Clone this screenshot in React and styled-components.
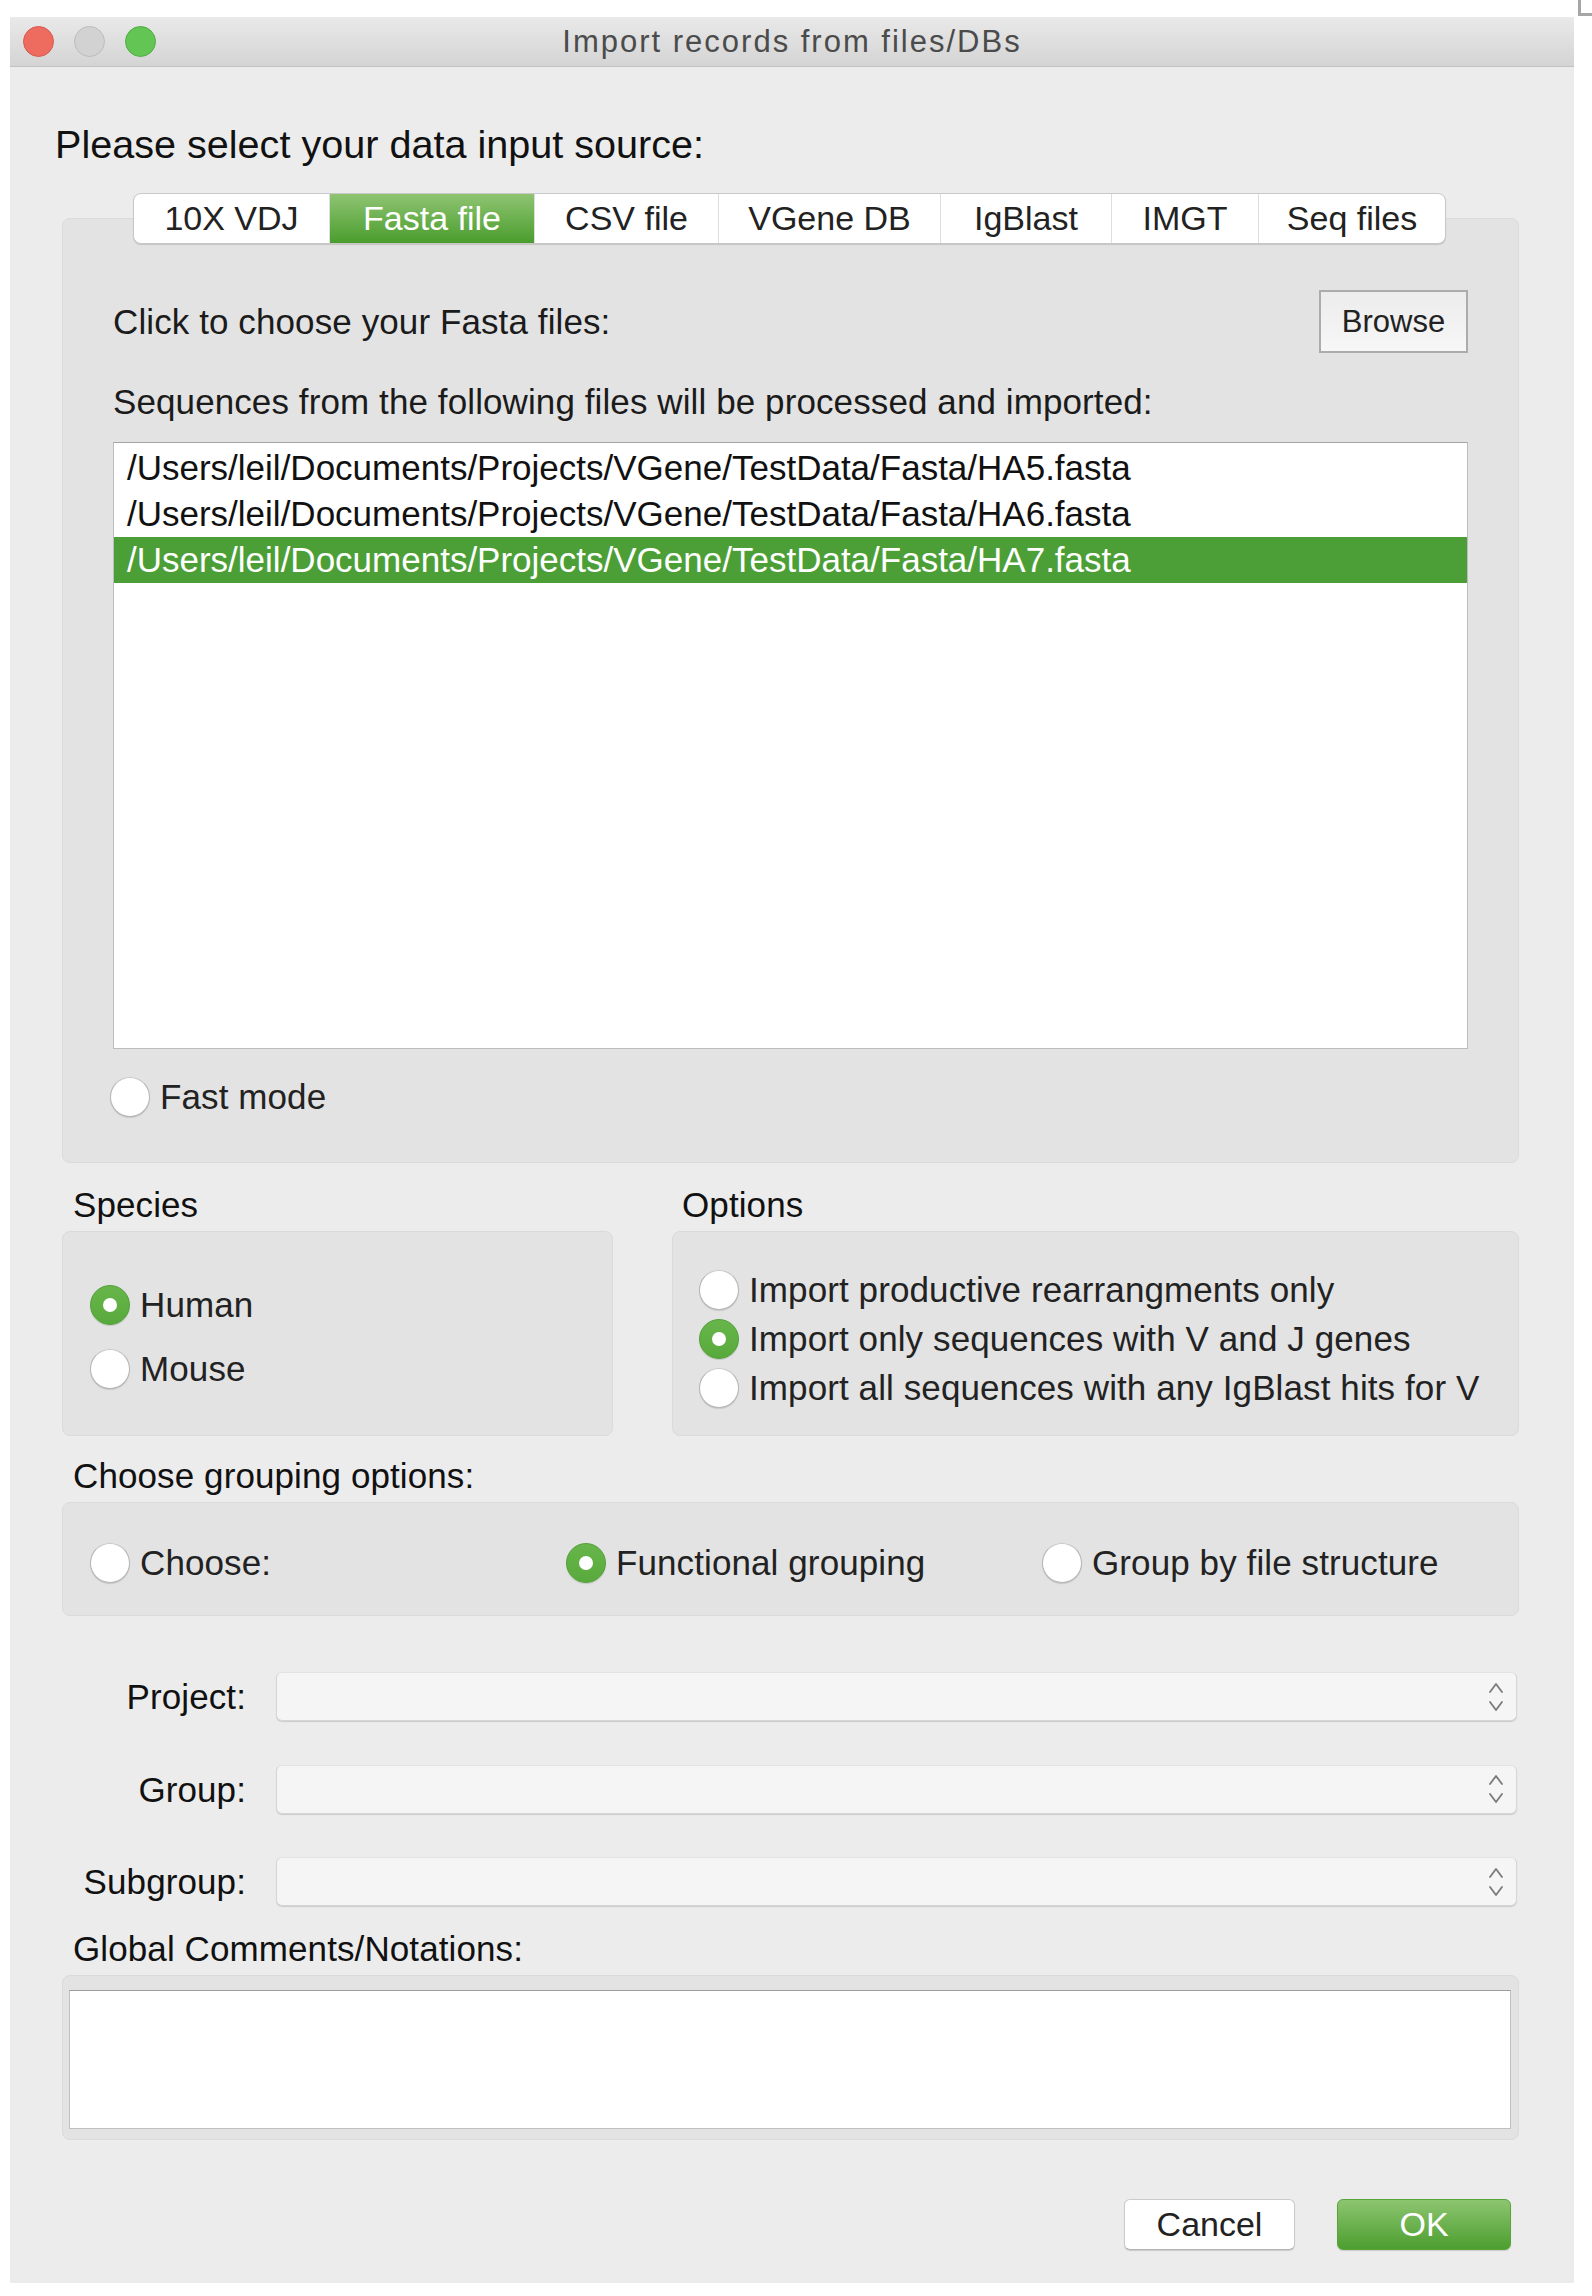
import React from 'react';
import styled, { createGlobalStyle, css } from 'styled-components';

const GlobalStyle = createGlobalStyle`
  html, body {
    margin: 0;
    padding: 0;
    background: #ffffff;
  }
  body {
    font-family: 'Liberation Sans', Arial, sans-serif;
    color: #1d1d1d;
  }
`;

const BODY_SIZE = '35px';

const Page = styled.div`
  position: relative;
  width: 1592px;
  height: 2296px;
  padding: 17px 0 0 10px;
  box-sizing: border-box;
`;

const CornerMark = styled.div`
  position: absolute;
  top: 0;
  left: 1578px;
  width: 11px;
  height: 13px;
  border-left: 3px solid #a6a6a6;
  border-bottom: 3px solid #a6a6a6;
`;

const Window = styled.div`
  width: 1564px;
  height: 2266px;
  background: #ececec;
  display: flex;
  flex-direction: column;
`;

const TitleBar = styled.div`
  height: 49px;
  border-bottom: 1px solid #c2c2c2;
  background: linear-gradient(#e9e9e9, #d4d4d4);
  display: grid;
  grid-template-columns: 1fr auto 1fr;
  align-items: center;
`;

const Lights = styled.div`
  display: flex;
  gap: 20px;
  padding-left: 13px;
`;

const Light = styled.span`
  width: 31px;
  height: 31px;
  border-radius: 50%;
  box-sizing: border-box;
  background: ${({ $color }) => $color.fill};
  border: 1px solid ${({ $color }) => $color.edge};
`;

const Title = styled.div`
  font-size: 31px;
  letter-spacing: 2px;
  color: #4b4b4b;
`;

const Content = styled.div`
  display: flex;
  flex-direction: column;
  padding: 0 55px 33px 52px;
`;

const Heading = styled.div`
  margin: 54px 0 0 -7px;
  font-size: 39.6px;
  line-height: 46px;
  color: #111111;
`;

const TabBar = styled.div`
  position: relative;
  z-index: 1;
  align-self: flex-start;
  display: flex;
  margin: 26px 0 0 71px;
  height: 51px;
  box-sizing: border-box;
  border: 1px solid #c8c8c8;
  border-radius: 8px;
  background: #ffffff;
  overflow: hidden;
  box-shadow: 0 1px 1px rgba(0, 0, 0, 0.14);
`;

const Tab = styled.div`
  width: ${({ $w }) => $w}px;
  display: flex;
  align-items: center;
  justify-content: center;
  font-size: 34px;
  color: #222222;
  & + & {
    border-left: 1px solid #dedede;
  }
  ${({ $active }) =>
    $active &&
    css`
      background: linear-gradient(#8fc472, #4a9d2d);
      color: #ffffff;
    `}
`;

const Pane = styled.div`
  margin-top: -26px;
  height: 945px;
  box-sizing: border-box;
  background: #e3e3e3;
  border: 1px solid #dadada;
  border-radius: 8px;
  padding: 71px 50px 0 50px;
  display: flex;
  flex-direction: column;
`;

const FileChooser = styled.div`
  display: flex;
  align-items: center;
  justify-content: space-between;
  height: 63px;
`;

const Label = styled.div`
  font-size: ${BODY_SIZE};
  letter-spacing: 0.1px;
  line-height: 40px;
  color: #1b1b1b;
  margin-top: ${({ $mt }) => $mt || 0}px;
`;

const BrowseButton = styled.div`
  width: 149px;
  height: 63px;
  box-sizing: border-box;
  border: 2px solid #acacac;
  background: linear-gradient(#ececec, #f7f7f7);
  display: flex;
  align-items: center;
  justify-content: center;
  font-size: 31px;
  color: #222222;
`;

const FileList = styled.div`
  margin-top: 20px;
  height: 607px;
  box-sizing: border-box;
  background: #ffffff;
  border: 1px solid #bcbcbc;
  border-top-color: #a4a4a4;
  padding-top: 2px;
`;

const FileItem = styled.div`
  height: 46px;
  line-height: 46px;
  padding-left: 13px;
  font-size: ${BODY_SIZE};
  color: ${({ $selected }) => ($selected ? '#ffffff' : '#111111')};
  background: ${({ $selected }) => ($selected ? '#4c9f36' : 'transparent')};
  white-space: nowrap;
`;

const RadioOption = styled.div`
  display: flex;
  align-items: center;
  gap: 10px;
  height: 40px;
  font-size: ${BODY_SIZE};
  letter-spacing: 0.1px;
  color: #222222;
  white-space: nowrap;
`;

const RadioCircle = styled.span`
  position: relative;
  flex: none;
  width: 40px;
  height: 40px;
  border-radius: 50%;
  box-sizing: border-box;
  background: #ffffff;
  border: 1px solid #b6b6b6;
  border-top-color: #c8c8c8;
  box-shadow: 0 1px 1px rgba(0, 0, 0, 0.12);
  ${({ $checked }) =>
    $checked &&
    css`
      background: linear-gradient(#68b64b, #58a93b);
      border-color: #53a03a;
      &::after {
        content: '';
        position: absolute;
        left: 12px;
        top: 12px;
        width: 14px;
        height: 14px;
        border-radius: 50%;
        background: #ffffff;
      }
    `}
`;

const Radio = ({ label, checked }) => (
  <RadioOption>
    <RadioCircle $checked={checked} />
    {label}
  </RadioOption>
);

const FastModeRow = styled.div`
  margin: 28px 0 0 -3px;
`;

const SplitRow = styled.div`
  display: flex;
  gap: 59px;
  margin-top: 22px;
`;

const Column = styled.div`
  display: flex;
  flex-direction: column;
  width: ${({ $w }) => ($w ? `${$w}px` : 'auto')};
  flex: ${({ $w }) => ($w ? 'none' : 1)};
`;

const SectionLabel = styled.div`
  font-size: ${BODY_SIZE};
  letter-spacing: 0.1px;
  line-height: 40px;
  color: #111111;
  margin: ${({ $mt }) => $mt || 0}px 0 6px ${({ $ml }) => $ml ?? 11}px;
`;

const GroupBox = styled.div`
  height: ${({ $h }) => $h}px;
  box-sizing: border-box;
  background: #e3e3e3;
  border: 1px solid #dadada;
  border-radius: 8px;
  padding: ${({ $pt }) => $pt}px 0 0 ${({ $pl }) => $pl}px;
  display: flex;
  flex-direction: column;
  gap: ${({ $gap }) => $gap || 0}px;
`;

const GroupingGrid = styled.div`
  display: grid;
  grid-template-columns: repeat(3, 476px);
`;

const FormGrid = styled.div`
  display: grid;
  grid-template-columns: 184px 1fr;
  column-gap: 30px;
  row-gap: 43.5px;
  margin: 56px 2px 0 0;
`;

const FormLabel = styled.div`
  text-align: right;
  font-size: ${BODY_SIZE};
  letter-spacing: 0.1px;
  line-height: 49px;
  color: #111111;
`;

const Combo = styled.div`
  height: 49px;
  box-sizing: border-box;
  background: #f5f5f5;
  border: 1px solid #d6d6d6;
  border-top-color: #e2e2e2;
  border-radius: 6px;
  box-shadow: 0 1px 1px rgba(0, 0, 0, 0.14);
  display: flex;
  align-items: center;
  justify-content: flex-end;
  padding-right: 11px;
`;

const Stepper = () => (
  <svg width="18" height="36" viewBox="0 0 18 36" fill="none">
    <path d="M3 13 L9 5 L15 13" stroke="#7a7a7a" strokeWidth="1.8" strokeLinecap="round" strokeLinejoin="round" />
    <path d="M3 23 L9 31 L15 23" stroke="#7a7a7a" strokeWidth="1.8" strokeLinecap="round" strokeLinejoin="round" />
  </svg>
);

const CommentsFrame = styled.div`
  height: 165px;
  box-sizing: border-box;
  background: #e3e3e3;
  border: 1px solid #dadada;
  border-radius: 8px;
  padding: 14px 7px 10px 6px;
  display: flex;
`;

const TextBox = styled.div`
  flex: 1;
  background: #ffffff;
  border: 1px solid #c0c0c0;
  border-top-color: #9c9c9c;
`;

const ButtonRow = styled.div`
  display: flex;
  justify-content: flex-end;
  gap: 42px;
  margin: 59px 8px 0 0;
`;

const DialogButton = styled.div`
  width: ${({ $w }) => $w}px;
  height: 51px;
  box-sizing: border-box;
  border-radius: 6px;
  display: flex;
  align-items: center;
  justify-content: center;
  font-size: 34px;
  background: #ffffff;
  color: #222222;
  border: 1px solid #cbcbcb;
  border-bottom-color: #b3b3b3;
  box-shadow: 0 1px 1px rgba(0, 0, 0, 0.14);
  ${({ $primary }) =>
    $primary &&
    css`
      background: linear-gradient(#8dc570, #4c9e2f);
      border-color: #58a53b;
      color: #ffffff;
    `}
`;

const lights = [
  { fill: '#ed6b5f', edge: '#d9594e' },
  { fill: '#d2d2d2', edge: '#bcbcbc' },
  { fill: '#62c554', edge: '#53ac45' },
];

const tabs = [
  { name: '10X VDJ', w: 195 },
  { name: 'Fasta file', w: 204, active: true },
  { name: 'CSV file', w: 183 },
  { name: 'VGene DB', w: 221 },
  { name: 'IgBlast', w: 170 },
  { name: 'IMGT', w: 146 },
  { name: 'Seq files', w: 186 },
];

const files = ['HA5', 'HA6', 'HA7'].map(
  (f) => `/Users/leil/Documents/Projects/VGene/TestData/Fasta/${f}.fasta`
);

const importOptions = [
  { label: 'Import productive rearrangments only', checked: false },
  { label: 'Import only sequences with V and J genes', checked: true },
  { label: 'Import all sequences with any IgBlast hits for V', checked: false },
];

const grouping = [
  { label: 'Choose:', checked: false },
  { label: 'Functional grouping', checked: true },
  { label: 'Group by file structure', checked: false },
];

const App = () => {
  return (
    <Page>
      <GlobalStyle />
      <CornerMark />
      <Window>
        <TitleBar>
          <Lights>
            {lights.map((c, i) => (
              <Light key={i} $color={c} />
            ))}
          </Lights>
          <Title>Import records from files/DBs</Title>
          <div />
        </TitleBar>
        <Content>
          <Heading>Please select your data input source:</Heading>
          <TabBar>
            {tabs.map((t) => (
              <Tab key={t.name} $w={t.w} $active={t.active}>
                {t.name}
              </Tab>
            ))}
          </TabBar>
          <Pane>
            <FileChooser>
              <Label>Click to choose your Fasta files:</Label>
              <BrowseButton>Browse</BrowseButton>
            </FileChooser>
            <Label $mt={29}>
              Sequences from the following files will be processed and imported:
            </Label>
            <FileList>
              {files.map((f, i) => (
                <FileItem key={f} $selected={i === files.length - 1}>
                  {f}
                </FileItem>
              ))}
            </FileList>
            <FastModeRow>
              <Radio label="Fast mode" />
            </FastModeRow>
          </Pane>

          <SplitRow>
            <Column $w={551}>
              <SectionLabel>Species</SectionLabel>
              <GroupBox $h={205} $pt={53} $pl={27} $gap={24}>
                <Radio label="Human" checked />
                <Radio label="Mouse" />
              </GroupBox>
            </Column>
            <Column>
              <SectionLabel $ml={10}>Options</SectionLabel>
              <GroupBox $h={205} $pt={38} $pl={26} $gap={9}>
                {importOptions.map((o) => (
                  <Radio key={o.label} label={o.label} checked={o.checked} />
                ))}
              </GroupBox>
            </Column>
          </SplitRow>

          <SectionLabel $mt={20}>Choose grouping options:</SectionLabel>
          <GroupBox $h={114} $pt={40} $pl={27}>
            <GroupingGrid>
              {grouping.map((g) => (
                <Radio key={g.label} label={g.label} checked={g.checked} />
              ))}
            </GroupingGrid>
          </GroupBox>

          <FormGrid>
            {['Project:', 'Group:', 'Subgroup:'].map((l) => (
              <React.Fragment key={l}>
                <FormLabel>{l}</FormLabel>
                <Combo>
                  <Stepper />
                </Combo>
              </React.Fragment>
            ))}
          </FormGrid>

          <SectionLabel $mt={23}>Global Comments/Notations:</SectionLabel>
          <CommentsFrame>
            <TextBox />
          </CommentsFrame>

          <ButtonRow>
            <DialogButton $w={171}>Cancel</DialogButton>
            <DialogButton $w={174} $primary>
              OK
            </DialogButton>
          </ButtonRow>
        </Content>
      </Window>
    </Page>
  );
};

export default App;
